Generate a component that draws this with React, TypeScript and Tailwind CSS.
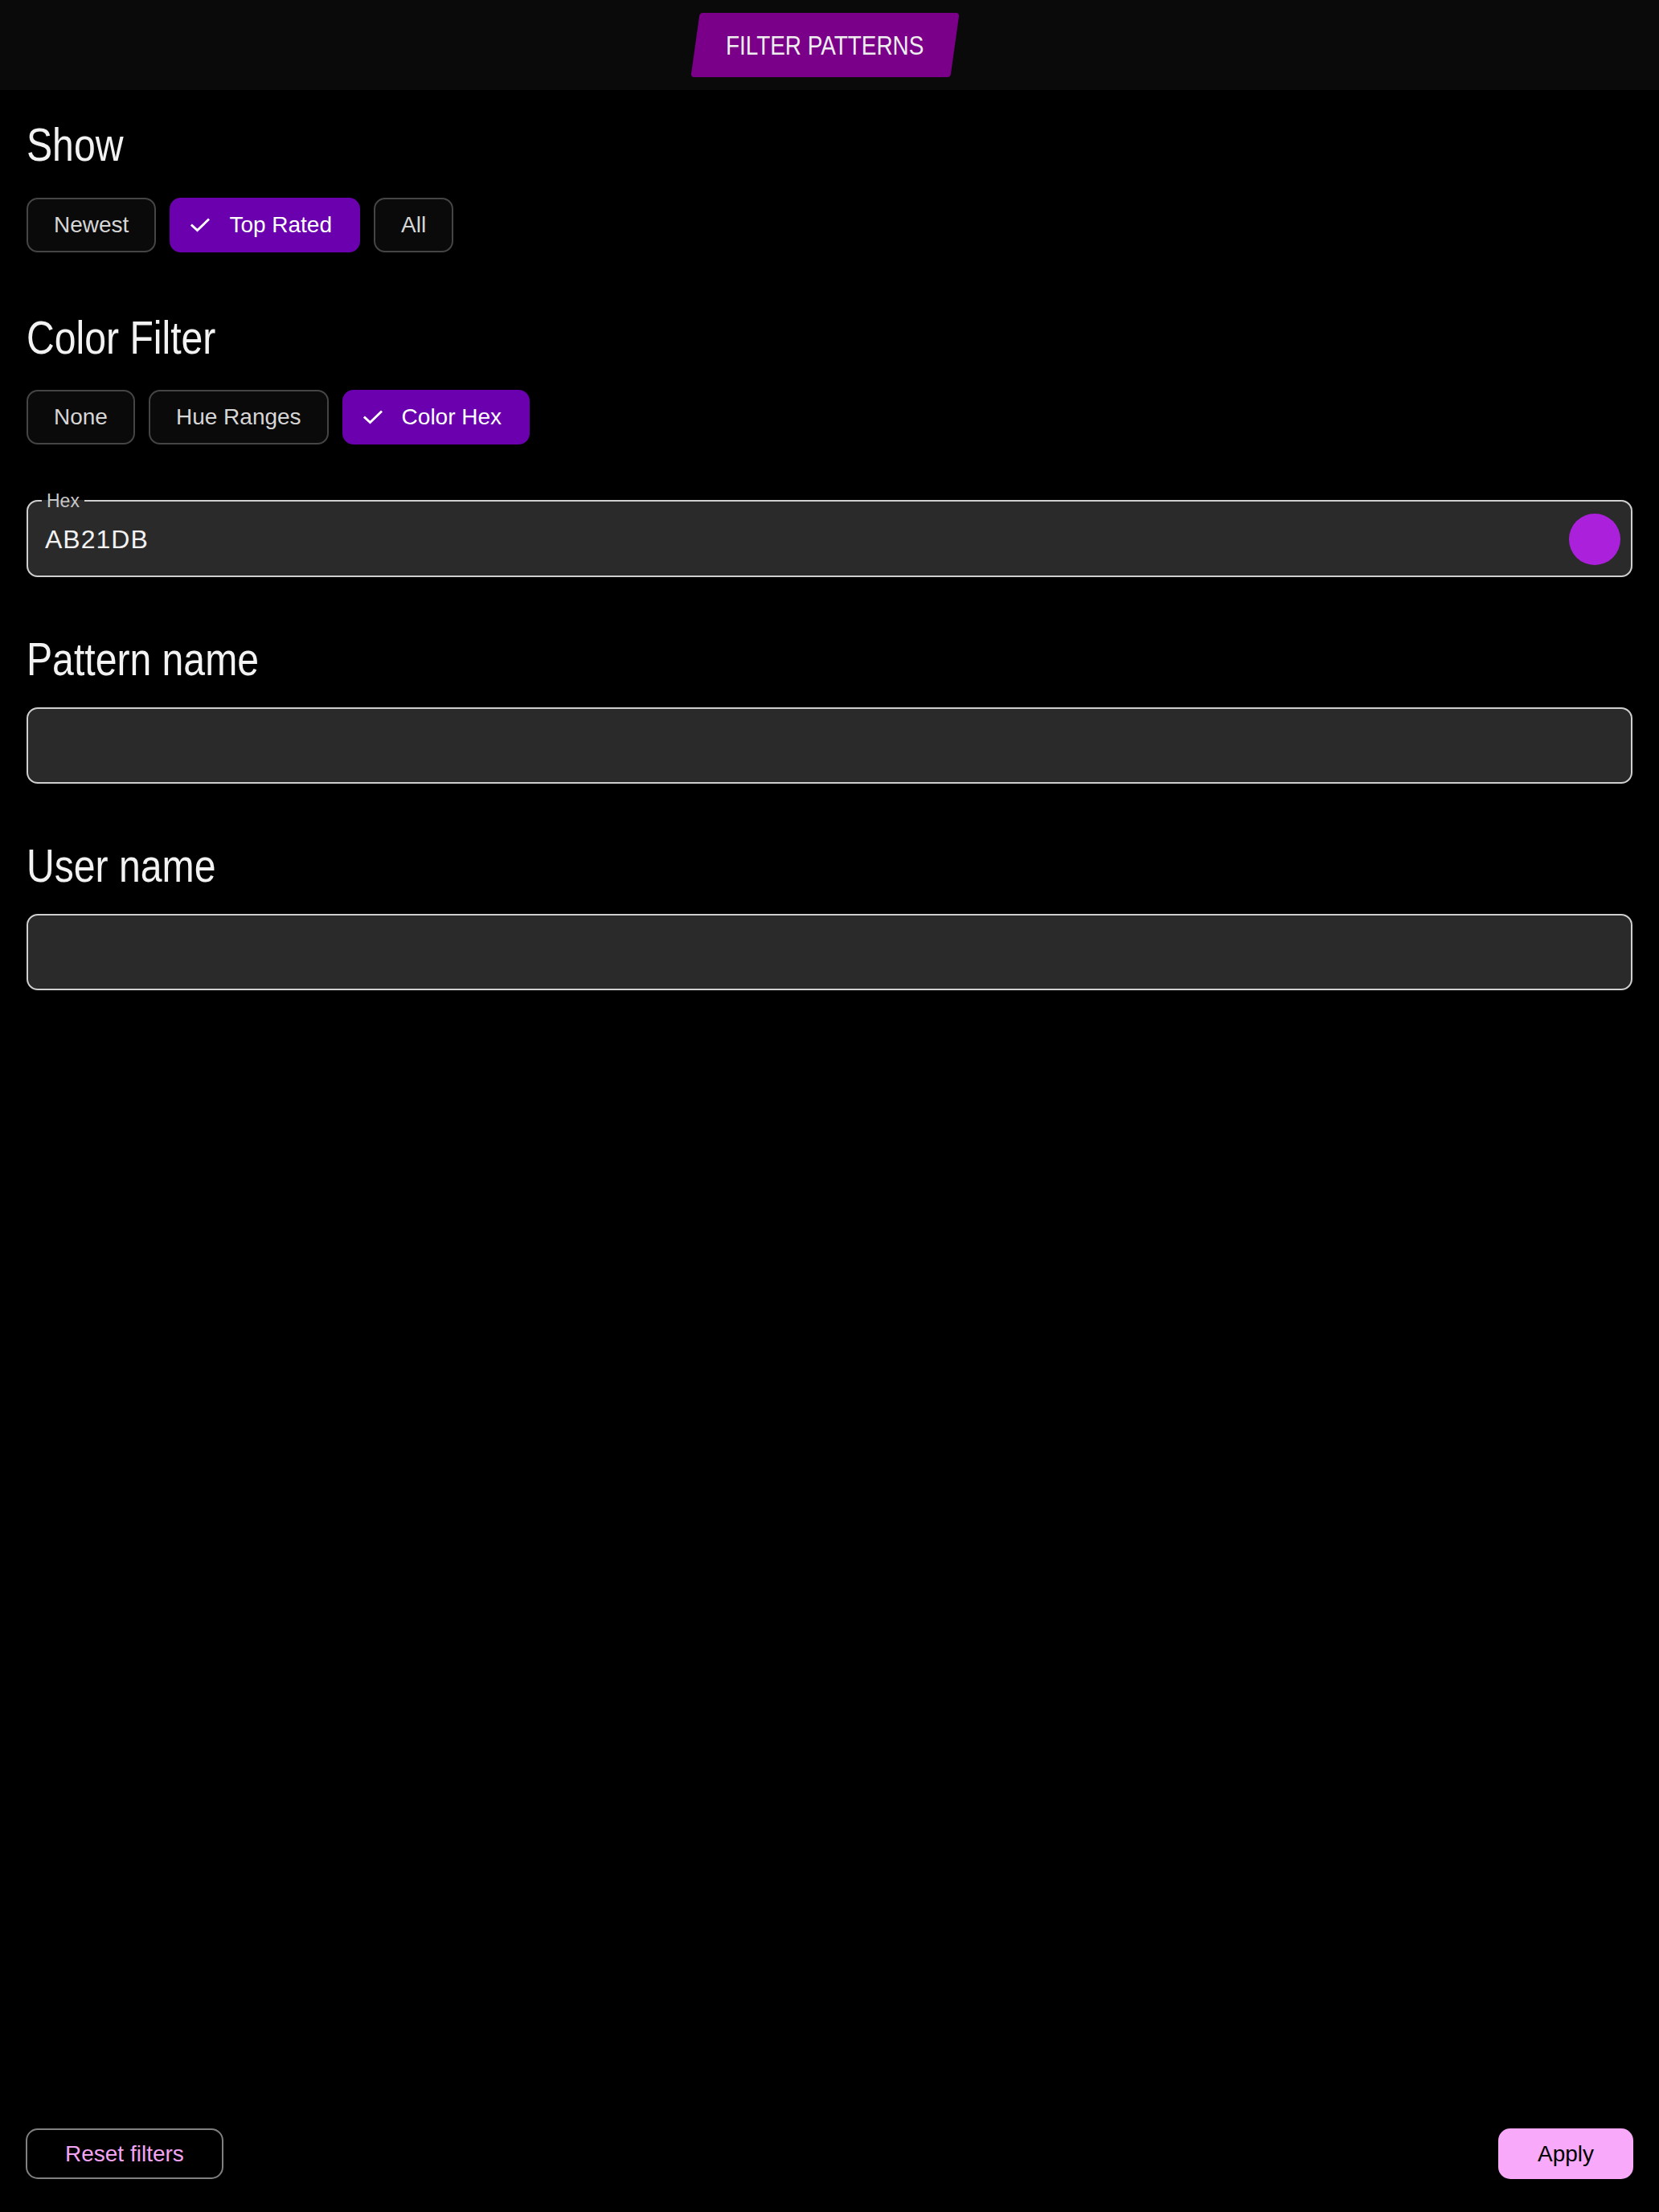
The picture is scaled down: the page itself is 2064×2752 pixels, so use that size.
import React from "react";

const body = "font-['Liberation_Sans',Arial,sans-serif]";

function Check() {
  return (
    <svg width="24" height="24" viewBox="0 0 24 24" fill="none" className="shrink-0">
      <path d="M2 12.5 L8.5 18.5 L22 5.5" stroke="white" strokeWidth="2.9" strokeLinecap="square" strokeLinejoin="miter" />
    </svg>
  );
}

function Chip({ label, selected }: { label: string; selected?: boolean }) {
  if (selected) {
    return (
      <button className={`h-[68px] rounded-[14px] bg-[#6a00ae] border-2 border-[#6a00ae] pl-[24px] pr-[33px] flex items-center gap-[24px] text-[28px] text-white ${body}`}>
        <Check />
        <span>{label}</span>
      </button>
    );
  }
  return (
    <button className={`h-[68px] rounded-[14px] bg-[#0a0a0a] border-2 border-[#454545] px-[32px] flex items-center text-[28px] text-[#d6d6d6] ${body}`}>
      {label}
    </button>
  );
}

function Heading({ children, className = "" }: { children: React.ReactNode; className?: string }) {
  return (
    <h2 className={`${body} text-[58px] leading-[56px] text-[#f2f2f2] whitespace-nowrap ${className}`}>
      <span className="inline-block origin-left scale-x-[0.83]">{children}</span>
    </h2>
  );
}

export default function App() {
  return (
    <div className={`min-h-screen bg-black flex flex-col ${body}`}>
      <header className="h-[112px] bg-[#0a0a0a] flex items-center justify-center pr-[12px]">
        <div className="h-[80px] w-[323px] bg-[#7a008a] rounded-[4px] skew-x-[-8deg] flex items-center justify-center">
          <span className="skew-x-[8deg] inline-block">
            <span className="inline-block scale-x-[0.82] text-[34px] text-[#eeeeee] whitespace-nowrap">FILTER PATTERNS</span>
          </span>
        </div>
      </header>

      <main className="px-[33px] pt-[40px] flex flex-col">
        <Heading>Show</Heading>
        <div className="mt-[38px] flex gap-[17px]">
          <Chip label="Newest" />
          <Chip label="Top Rated" selected />
          <Chip label="All" />
        </div>

        <Heading className="mt-[78px]">Color Filter</Heading>
        <div className="mt-[37px] flex gap-[17px]">
          <Chip label="None" />
          <Chip label="Hue Ranges" />
          <Chip label="Color Hex" selected />
        </div>

        <fieldset className="mt-[58px] border-2 border-[#cfcfcf] rounded-[14px] bg-[#2a2a2a] pl-[17px] pr-[13px] min-w-0">
          <legend className="px-[6px] text-[23px] leading-[24px] text-[#c8c8c8]">Hex</legend>
          <div className="flex items-center justify-between pt-[4px] pb-[13px] pl-[4px]">
            <span className="text-[32px] tracking-[1px] text-[#f2f2f2]">AB21DB</span>
            <div className="w-[64px] h-[64px] rounded-full bg-[#ab21db]" />
          </div>
        </fieldset>

        <Heading className="mt-[74px]">Pattern name</Heading>
        <input
          className="mt-[32px] h-[95px] w-full border-2 border-[#cfcfcf] rounded-[14px] bg-[#2a2a2a] outline-none px-[22px] text-[32px] text-white"
          readOnly
        />

        <Heading className="mt-[74px]">User name</Heading>
        <input
          className="mt-[32px] h-[95px] w-full border-2 border-[#cfcfcf] rounded-[14px] bg-[#2a2a2a] outline-none px-[22px] text-[32px] text-white"
          readOnly
        />
      </main>

      <footer className="mt-auto px-[32px] pb-[41px] flex items-center justify-between">
        <button className="h-[63px] rounded-[15px] border-2 border-[#808080] px-[47px] text-[28px] text-[#f3a4f3]">
          Reset filters
        </button>
        <button className="h-[63px] rounded-[15px] bg-[#f9a9f9] px-[49px] text-[28px] text-black">
          Apply
        </button>
      </footer>
    </div>
  );
}
